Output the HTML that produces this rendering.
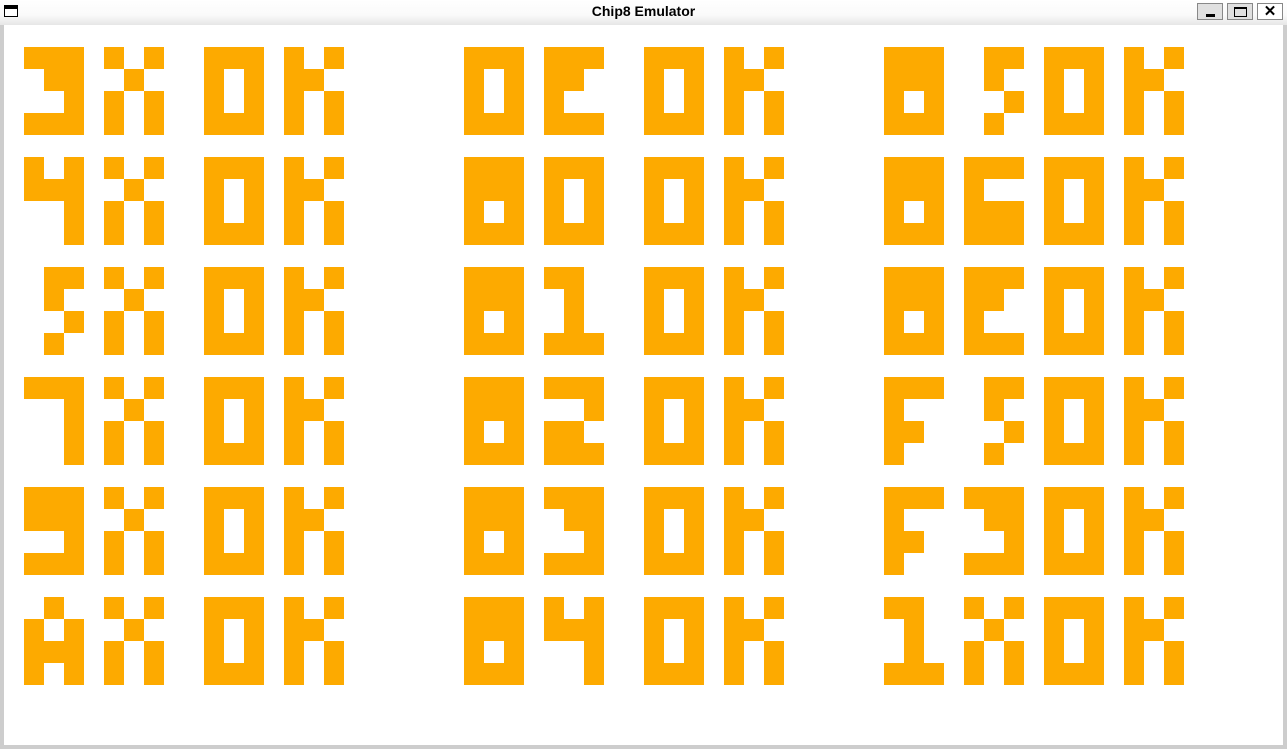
<!DOCTYPE html>
<html><head><style>
body{margin:0;width:1287px;height:749px;overflow:hidden;background:#fff;font-family:"Liberation Sans",sans-serif;position:relative}
#tb{position:absolute;left:0;top:0;width:1287px;height:25px;background:linear-gradient(#fff,#fafafa 60%,#e6e6e6)}
#title{position:absolute;left:0;width:1287px;top:3px;text-align:center;font-weight:bold;font-size:14px;color:#000}
.bl{position:absolute;background:#cdcdcd}
.btn{position:absolute;top:3px;width:26px;height:17px;border:1px solid #888;background:#e0e0e0;box-sizing:border-box}
#scr{position:absolute;left:4px;top:25px;width:1279px;height:720px;background:#fff}
.p{position:absolute;width:20px;height:22px;background:#fdaa00}
</style></head><body>
<div id="tb"><div id="title">Chip8 Emulator</div>
<div style="position:absolute;left:4px;top:5px;width:14px;height:12px;border:1.5px solid #000;border-top:4px solid #000;box-sizing:border-box;background:#fff"></div>
<div class="btn" style="left:1197px"><div style="position:absolute;left:8px;top:10px;width:9px;height:3px;background:#000"></div></div>
<div class="btn" style="left:1227px"><div style="position:absolute;left:6px;top:3px;width:13px;height:10px;border:1.5px solid #000;border-top:2.5px solid #000;box-sizing:border-box"></div></div>
<div class="btn" style="left:1257px;background:#fff;font-weight:bold;font-size:15px;text-align:center;line-height:15px">✕</div>
</div>
<div class="bl" style="left:0;top:25px;width:4px;height:724px"></div>
<div class="bl" style="left:1283px;top:25px;width:4px;height:724px"></div>
<div class="bl" style="left:0;top:745px;width:1287px;height:4px"></div>
<div id="scr"></div>
<script>
var G={
'3':['XXX','.XX','..X','XXX'],'x':['X.X','.X.','X.X','X.X'],'0':['XXX','X.X','X.X','XXX'],
'K':['X.X','XX.','X.X','X.X'],'4':['X.X','XXX','..X','..X'],'5':['.XX','.X.','..X','.X.'],
'7':['XXX','..X','..X','..X'],'9':['XXX','XXX','..X','XXX'],'A':['.X.','X.X','XXX','X.X'],
'B':['XXX','XXX','X.X','XXX'],'E':['XXX','XX.','X..','XXX'],'1':['XX.','.X.','.X.','XXX'],
'2':['XXX','..X','XX.','XXX'],'C':['XXX','X..','XXX','XXX'],'F':['XXX','X..','XX.','X..']};
var rows=['3x0K','4x0K','5x0K','7x0K','9x0K','Ax0K'];
var g2=['0E0K','B00K','B10K','B20K','B30K','B40K'];
var g3=['B50K','BC0K','BE0K','F50K','F30K','1x0K'];
var cols=[[1,5,10,14],[23,27,32,36],[44,48,52,56]];
var s=document.getElementById('scr'),h='';
[rows,g2,g3].forEach(function(grp,gi){grp.forEach(function(str,ri){
 for(var c=0;c<4;c++){var gl=G[str[c]];for(var y=0;y<4;y++)for(var x=0;x<3;x++)if(gl[y][x]=='X'){
  h+='<div class="p" style="left:'+((cols[gi][c]+x)*20)+'px;top:'+((1+ri*5+y)*22)+'px"></div>';}}
});});
s.innerHTML=h;
</script>
</body></html>
